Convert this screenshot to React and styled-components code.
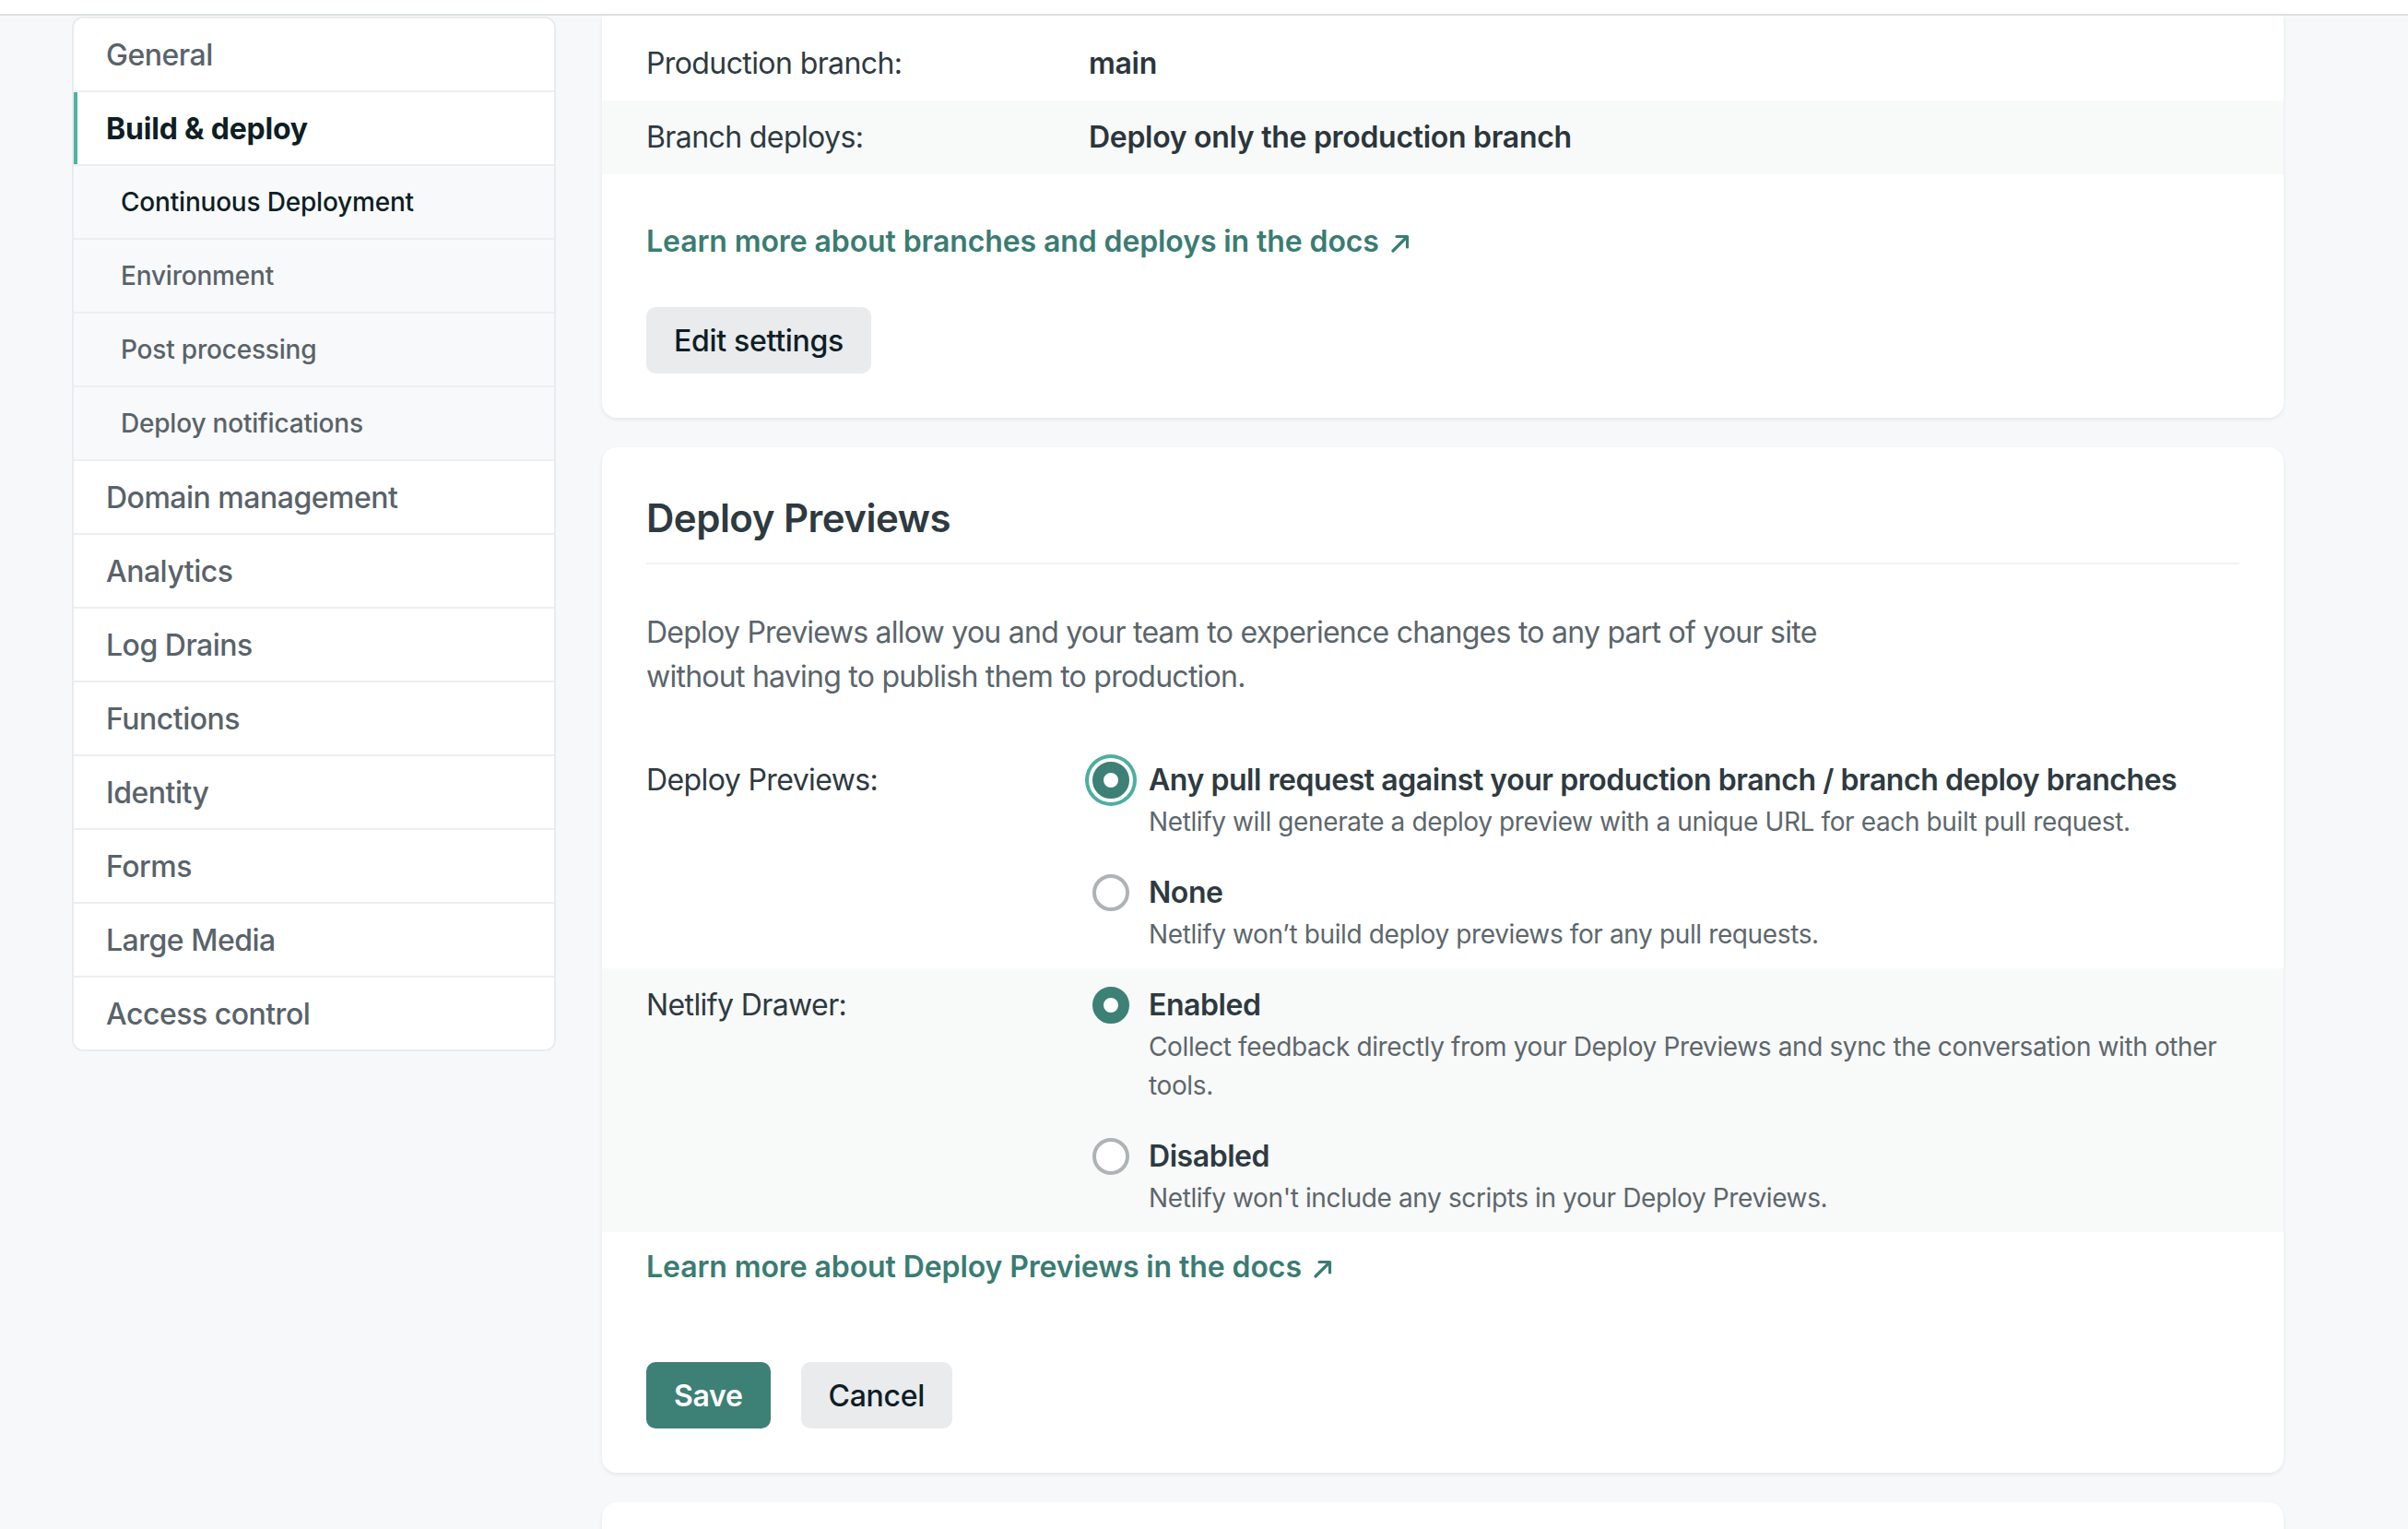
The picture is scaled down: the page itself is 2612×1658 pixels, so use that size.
import React from 'react';
import styled, { createGlobalStyle } from 'styled-components';

const GlobalStyle = createGlobalStyle`
  * { box-sizing: border-box; }
  html, body {
    margin: 0;
    padding: 0;
    overflow: hidden;
  }
  body {
    background: #f6f8f9;
    font-family: Inter, "Noto Sans", "Liberation Sans", sans-serif;
    color: #2e3a40;
    -webkit-font-smoothing: antialiased;
  }
`;

const TopBar = styled.div`
  height: 17px;
  background: #fff;
  border-bottom: 2px solid #dcdfe0;
`;

const Layout = styled.div`
  display: flex;
  align-items: flex-start;
  gap: 50px;
  padding-left: 78px;
  height: 1641px;
  overflow: hidden;
`;

const Sidebar = styled.nav`
  width: 525px;
  margin-top: 1px;
  background: #fff;
  border: 2px solid #e9ecee;
  border-radius: 12px;
  overflow: hidden;
`;

const NavItem = styled.div`
  display: flex;
  align-items: center;
  border-top: ${(p) => (p.$first ? 'none' : '2px solid #eceff0')};
  height: ${(p) => (p.$first ? '78px' : '80px')};
  padding-left: ${(p) => (p.$sub ? '51px' : '35px')};
  background: ${(p) => (p.$sub ? '#f8f9fa' : '#fff')};
  box-shadow: ${(p) => (p.$active ? 'inset 4px 0 0 #4fb3a3' : 'none')};
  font-size: ${(p) => (p.$sub ? '28px' : '32px')};
  font-weight: ${(p) => (p.$active ? 700 : 500)};
  color: ${(p) => (p.$active || p.$current ? '#0e1e25' : '#59636a')};
  letter-spacing: ${(p) => (p.$sub || p.$active ? '-0.2px' : '-0.5px')};
`;

const Main = styled.main`
  width: 1824px;
  display: flex;
  flex-direction: column;
  gap: 32px;
`;

const Card = styled.section`
  background: #fff;
  border-radius: ${(p) => (p.$cut ? '0 0 16px 16px' : '16px')};
  box-shadow: 0 2px 4px rgba(14, 30, 37, 0.07);
  padding-top: ${(p) => (p.$cut ? '12px' : '53px')};
  padding-bottom: 48px;
  min-height: ${(p) => (p.$stub ? '300px' : 'auto')};
`;

const Row = styled.div`
  display: grid;
  grid-template-columns: 480px 1fr;
  align-items: ${(p) => (p.$top ? 'start' : 'center')};
  min-height: 80px;
  padding: ${(p) => (p.$top ? '16px 48px' : '0 48px')};
  background: ${(p) => (p.$shaded ? '#f8f9f9' : 'transparent')};
`;

const Label = styled.div`
  font-size: 32px;
  line-height: 48px;
  color: #2e3a40;
  letter-spacing: -0.6px;
`;

const Value = styled.div`
  font-size: 32px;
  line-height: 48px;
  font-weight: 600;
  color: #2b363b;
  letter-spacing: -0.3px;
`;

const DocsLink = styled.a`
  display: flex;
  align-items: center;
  gap: 12px;
  width: max-content;
  margin: ${(p) => p.$margin} 48px 0;
  font-size: 32px;
  line-height: 48px;
  font-weight: 600;
  color: #3a7c72;
  text-decoration: none;
  letter-spacing: -0.1px;
`;

const Button = styled.button`
  height: 72px;
  padding: 0 30px;
  border: none;
  border-radius: 10px;
  background: ${(p) => (p.$primary ? '#3d8076' : '#e9ebed')};
  color: ${(p) => (p.$primary ? '#fff' : '#0e1e25')};
  font-family: inherit;
  font-size: 32px;
  font-weight: ${(p) => (p.$primary ? 600 : 500)};
  letter-spacing: -0.3px;
`;

const ButtonRow = styled.div`
  display: flex;
  gap: 33px;
  margin: ${(p) => p.$margin} 48px 0;
`;

const Title = styled.h2`
  margin: 0 48px;
  font-size: 42px;
  line-height: 48px;
  font-weight: 600;
  color: #2e3a40;
  letter-spacing: -0.5px;
`;

const Divider = styled.hr`
  margin: 24px 48px 0;
  border: none;
  height: 2px;
  background: #f0f2f3;
`;

const Intro = styled.p`
  margin: 50px 48px 48px;
  max-width: 1320px;
  font-size: 32px;
  line-height: 48px;
  color: #5a656b;
  letter-spacing: -0.75px;
`;

const Options = styled.div`
  display: flex;
  flex-direction: column;
  gap: 32px;
  padding-left: 4px;
`;

const Option = styled.label`
  display: grid;
  grid-template-columns: 40px 1fr;
  column-gap: 21px;
`;

const Radio = styled.span`
  width: 40px;
  height: 40px;
  margin-top: 4px;
  border-radius: 50%;
  background: #fff;
  border: ${(p) => (p.$checked ? '12px solid #3d8076' : '4px solid #aeb3b5')};
  box-shadow: ${(p) => (p.$focus ? '0 0 0 4px #fff, 0 0 0 8px #4fae9f' : 'none')};
`;

const OptionTitle = styled.div`
  font-size: 32px;
  line-height: 48px;
  font-weight: 600;
  color: #2e3a40;
  letter-spacing: -0.45px;
`;

const OptionDesc = styled.div`
  font-size: 28px;
  line-height: 42px;
  color: #5d676c;
  letter-spacing: -0.38px;
`;

function ExternalArrow() {
  return (
    <svg width="22" height="22" viewBox="0 0 22 22" fill="none" style={{ marginTop: 4 }}>
      <path d="M3 19 L18 4 M7 3.5 H18.5 V15" stroke="#3a7c72" strokeWidth="3.2" strokeLinecap="round" strokeLinejoin="round" />
    </svg>
  );
}

const navItems = [
  { label: 'General' },
  { label: 'Build & deploy', active: true },
  { label: 'Continuous Deployment', sub: true, current: true },
  { label: 'Environment', sub: true },
  { label: 'Post processing', sub: true },
  { label: 'Deploy notifications', sub: true },
  { label: 'Domain management' },
  { label: 'Analytics' },
  { label: 'Log Drains' },
  { label: 'Functions' },
  { label: 'Identity' },
  { label: 'Forms' },
  { label: 'Large Media' },
  { label: 'Access control' },
];

function RadioOption({ title, desc, checked, focus }) {
  return (
    <Option>
      <Radio $checked={checked} $focus={focus} />
      <div>
        <OptionTitle>{title}</OptionTitle>
        <OptionDesc>{desc}</OptionDesc>
      </div>
    </Option>
  );
}

export default function App() {
  return (
    <>
      <GlobalStyle />
      <TopBar />
      <Layout>
        <Sidebar>
          {navItems.map((item, i) => (
            <NavItem
              key={item.label}
              $first={i === 0}
              $sub={item.sub}
              $active={item.active}
              $current={item.current}
            >
              {item.label}
            </NavItem>
          ))}
        </Sidebar>

        <Main>
          <Card $cut>
            <Row>
              <Label>Production branch:</Label>
              <Value>main</Value>
            </Row>
            <Row $shaded>
              <Label>Branch deploys:</Label>
              <Value>Deploy only the production branch</Value>
            </Row>
            <DocsLink href="#" $margin="49px">
              Learn more about branches and deploys in the docs
              <ExternalArrow />
            </DocsLink>
            <ButtonRow $margin="47px">
              <Button>Edit settings</Button>
            </ButtonRow>
          </Card>

          <Card>
            <Title>Deploy Previews</Title>
            <Divider />
            <Intro>
              Deploy Previews allow you and your team to experience changes to any part of your site
              without having to publish them to production.
            </Intro>
            <Row $top>
              <Label>Deploy Previews:</Label>
              <Options>
                <RadioOption
                  checked
                  focus
                  title="Any pull request against your production branch / branch deploy branches"
                  desc="Netlify will generate a deploy preview with a unique URL for each built pull request."
                />
                <RadioOption
                  title="None"
                  desc="Netlify won’t build deploy previews for any pull requests."
                />
              </Options>
            </Row>
            <Row $top $shaded>
              <Label>Netlify Drawer:</Label>
              <Options>
                <RadioOption
                  checked
                  title="Enabled"
                  desc="Collect feedback directly from your Deploy Previews and sync the conversation with other tools."
                />
                <RadioOption
                  title="Disabled"
                  desc="Netlify won't include any scripts in your Deploy Previews."
                />
              </Options>
            </Row>
            <DocsLink href="#" $margin="14px">
              Learn more about Deploy Previews in the docs
              <ExternalArrow />
            </DocsLink>
            <ButtonRow $margin="79px">
              <Button $primary>Save</Button>
              <Button>Cancel</Button>
            </ButtonRow>
          </Card>

          <Card $stub />
        </Main>
      </Layout>
    </>
  );
}
